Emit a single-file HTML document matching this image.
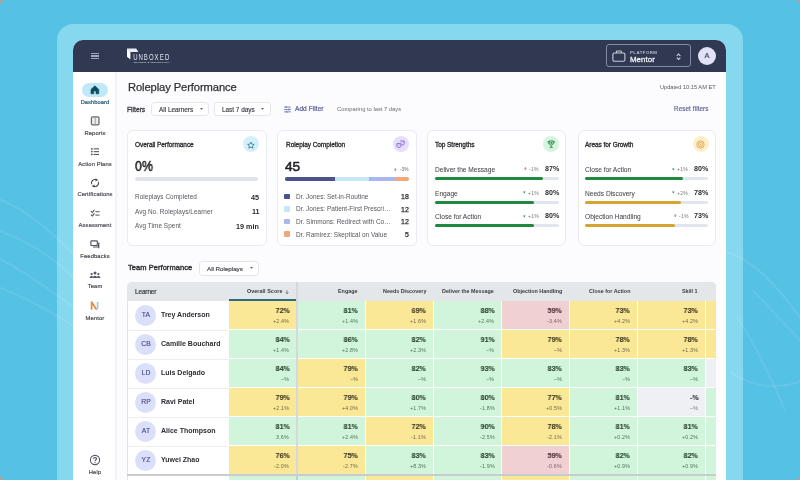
<!DOCTYPE html><html><head><meta charset="utf-8"><style>
html,body{margin:0;padding:0;width:800px;height:480px;overflow:hidden;background:#a4a4a4;font-family:"Liberation Sans", sans-serif;}
.t{position:absolute;line-height:1;white-space:nowrap;will-change:transform;}
svg{overflow:visible}
</style></head><body><div style="position:absolute;left:0.00px;top:0.00px;width:800.00px;height:480.00px;background:#55c1e5;border-radius:6px;"></div><div style="position:absolute;left:57.00px;top:24.00px;width:686.00px;height:516.00px;background:#85d8ee;border-radius:16px;"></div><svg style="position:absolute;left:0;top:0" width="800" height="480" viewBox="0 0 800 480">
<g fill="none" stroke="#ffffff" stroke-opacity="0.09" stroke-width="2.2">
<path d="M-10 196 C 20 205, 50 228, 80 262"/>
<path d="M-10 228 C 25 238, 55 258, 80 284"/>
<path d="M-10 254 C 20 268, 50 290, 80 312"/>
<path d="M-10 284 C 25 296, 55 314, 80 330"/>
<path d="M726 252 C 750 258, 778 285, 805 325"/>
<path d="M738 318 C 755 345, 770 375, 785 410"/>
<path d="M752 290 C 772 310, 790 330, 805 345"/>
<path d="M730 372 C 760 392, 790 388, 805 378"/>
</g></svg><div style="position:absolute;left:73.00px;top:40.00px;width:653.00px;height:480.00px;background:#fcfcfe;border-radius:10px;"></div><div style="position:absolute;left:73.00px;top:40.00px;width:653.00px;height:32.00px;background:#313851;border-radius:10px 10px 0 0;"></div><div style="position:absolute;left:90.60px;top:52.90px;width:8.80px;height:1.40px;background:#a3a7bc;"></div><div style="position:absolute;left:90.60px;top:55.30px;width:8.80px;height:1.40px;background:#a3a7bc;"></div><div style="position:absolute;left:90.60px;top:57.70px;width:8.80px;height:1.40px;background:#a3a7bc;"></div><svg style="position:absolute;left:126.00px;top:47.00px" width="14" height="14" viewBox="0 0 14 14"><polygon points="1,1.4 10.2,1.4 12.4,4.9 4.4,4.9" fill="#eceef6"/><polygon points="1,1.4 4.4,4.9 4.4,12.4 1,9.8" fill="#ffffff"/></svg><svg style="position:absolute;left:0;top:0;will-change:transform" width="800" height="80"><g font-family="Liberation Sans" font-size="9.4" fill="#dfe1ee"><text x="208.12" y="59.6" transform="scale(0.64,1)">U</text><text x="216.41" y="59.6" transform="scale(0.64,1)">N</text><text x="224.69" y="59.6" transform="scale(0.64,1)">B</text><text x="232.97" y="59.6" transform="scale(0.64,1)">O</text><text x="241.25" y="59.6" transform="scale(0.64,1)">X</text><text x="249.53" y="59.6" transform="scale(0.64,1)">E</text><text x="257.81" y="59.6" transform="scale(0.64,1)">D</text></g><text x="133.4" y="63.2" font-family="Liberation Sans" font-weight="700" font-size="2.2" fill="#c2c5d8" textLength="36.4" lengthAdjust="spacingAndGlyphs">TRAINING &amp; TECHNOLOGY</text></svg><div style="position:absolute;left:606.30px;top:44.40px;width:84.70px;height:22.50px;border:1px solid #858aa3;border-radius:3px;box-sizing:border-box;"></div><svg style="position:absolute;left:612.00px;top:50.00px" width="14" height="12" viewBox="0 0 14 12"><rect x="0.9" y="3" width="12" height="8.2" rx="1.5" fill="none" stroke="#c9ccd9" stroke-width="1.1"/><path d="M4.4 3 V1.8 Q4.4 0.9 5.3 0.9 H8.5 Q9.4 0.9 9.4 1.8 V3" fill="none" stroke="#c9ccd9" stroke-width="1.05"/></svg><div class="t" style="left:630.00px;top:50.63px;font-size:4.4px;font-weight:700;color:#b9bdcf;letter-spacing:0.42px;">PLATFORM</div><div class="t" style="left:630.00px;top:55.57px;font-size:7.9px;font-weight:400;color:#f3f4f8;-webkit-text-stroke:0.28px #f3f4f8;letter-spacing:0.05px;">Mentor</div><svg style="position:absolute;left:676.00px;top:52.50px" width="6" height="8" viewBox="0 0 6 8"><path d="M0.8 2.8 L2.6 1 L4.4 2.8 M0.8 4.7 L2.6 6.5 L4.4 4.7" fill="none" stroke="#c9ccd9" stroke-width="1.1"/></svg><div style="position:absolute;left:697.80px;top:46.80px;width:18.20px;height:18.20px;background:#e1e1f8;border-radius:50%;"></div><div class="t" style="left:606.90px;width:200px;text-align:center;top:51.93px;font-size:7.4px;font-weight:400;color:#3c3f5e;-webkit-text-stroke:0.2px #3c3f5e;">A</div><div style="position:absolute;left:73.00px;top:72.00px;width:41.60px;height:408.00px;background:#ffffff;"></div><div style="position:absolute;left:114.60px;top:72.00px;width:3.40px;height:408.00px;background:linear-gradient(to right,#eeeff3,#fcfcfe);"></div><div style="position:absolute;left:82.00px;top:83.10px;width:25.80px;height:13.70px;background:#bfe8f8;border-radius:7px;"></div><svg style="position:absolute;left:90.00px;top:85.00px" width="10" height="10" viewBox="0 0 10 10"><path d="M1 4.4 L4.9 0.8 L8.8 4.4 V8.8 H6 V6 H3.8 V8.8 H1 Z" fill="#0f4b5e" stroke="#0f4b5e" stroke-width="0.6" stroke-linejoin="round"/></svg><div class="t" style="left:-5.00px;width:200px;text-align:center;top:100.26px;font-size:5.7px;font-weight:400;color:#2a5f77;letter-spacing:0.1px;-webkit-text-stroke:0.22px #2a5f77;">Dashboard</div><div class="t" style="left:-5.00px;width:200px;text-align:center;top:130.54px;font-size:5.8px;font-weight:400;color:#4d4e55;-webkit-text-stroke:0.20px #4d4e55;letter-spacing:0.12px;">Reports</div><div class="t" style="left:-5.00px;width:200px;text-align:center;top:161.54px;font-size:5.8px;font-weight:400;color:#4d4e55;-webkit-text-stroke:0.20px #4d4e55;letter-spacing:0.12px;">Action Plans</div><div class="t" style="left:-5.00px;width:200px;text-align:center;top:192.24px;font-size:5.8px;font-weight:400;color:#4d4e55;-webkit-text-stroke:0.20px #4d4e55;letter-spacing:0.12px;">Certifications</div><div class="t" style="left:-5.00px;width:200px;text-align:center;top:223.24px;font-size:5.8px;font-weight:400;color:#4d4e55;-webkit-text-stroke:0.20px #4d4e55;letter-spacing:0.12px;">Assessment</div><div class="t" style="left:-5.00px;width:200px;text-align:center;top:254.24px;font-size:5.8px;font-weight:400;color:#4d4e55;-webkit-text-stroke:0.20px #4d4e55;letter-spacing:0.12px;">Feedbacks</div><div class="t" style="left:-5.00px;width:200px;text-align:center;top:284.44px;font-size:5.8px;font-weight:400;color:#4d4e55;-webkit-text-stroke:0.20px #4d4e55;letter-spacing:0.12px;">Team</div><div class="t" style="left:-5.00px;width:200px;text-align:center;top:315.74px;font-size:5.8px;font-weight:400;color:#4d4e55;-webkit-text-stroke:0.20px #4d4e55;letter-spacing:0.12px;">Mentor</div><div class="t" style="left:-5.00px;width:200px;text-align:center;top:470.04px;font-size:5.8px;font-weight:400;color:#4d4e55;-webkit-text-stroke:0.20px #4d4e55;letter-spacing:0.12px;">Help</div><svg style="position:absolute;left:90.00px;top:116.00px" width="10" height="10" viewBox="0 0 10 10"><rect x="1.4" y="0.9" width="7.6" height="7.9" rx="1.3" fill="#ececee" stroke="#66696f" stroke-width="1.25"/><path d="M5.2 1.2 V8.5" stroke="#8a8d93" stroke-width="0.8"/></svg><svg style="position:absolute;left:90.00px;top:147.00px" width="10" height="9" viewBox="0 0 10 9"><g fill="#555861"><circle cx="1.8" cy="1.9" r="0.9"/><circle cx="1.8" cy="4.6" r="0.9"/><circle cx="1.8" cy="7.4" r="0.9"/><rect x="3.6" y="1.3" width="5.4" height="1.1"/><rect x="3.6" y="4.1" width="5.4" height="1.1"/><rect x="3.6" y="6.9" width="5.4" height="1.1"/></g></svg><svg style="position:absolute;left:90.00px;top:177.80px" width="10" height="10" viewBox="0 0 10 10"><g fill="none" stroke="#505359" stroke-width="1.1"><path d="M1.7 6.2 A3.4 3.4 0 0 1 6.2 1.8"/><path d="M8.3 3.8 A3.4 3.4 0 0 1 3.8 8.2"/></g><g fill="#505359"><path d="M5.4 0.2 L8.4 2.0 L5.5 3.6 Z"/><path d="M4.6 9.8 L1.6 8.0 L4.5 6.4 Z"/></g></svg><svg style="position:absolute;left:90.00px;top:209.00px" width="11" height="9" viewBox="0 0 11 9"><g fill="none" stroke="#555861" stroke-width="1.1" stroke-linecap="round"><path d="M1.2 2.4 L2.4 3.5 L4.2 1.2"/><path d="M1.2 5.8 L2.4 6.9 L4.2 4.6"/></g><g fill="#555861"><rect x="5.4" y="2.2" width="4.2" height="1"/><rect x="5.4" y="5.6" width="4.2" height="1"/></g></svg><svg style="position:absolute;left:90.00px;top:239.50px" width="11" height="9" viewBox="0 0 11 9"><g fill="none" stroke="#555861" stroke-width="1.15"><rect x="0.9" y="0.9" width="6.4" height="4.6" rx="0.6"/><path d="M3 7 H8.6 V3 M8.8 2.4 V8.2"/></g></svg><svg style="position:absolute;left:89.00px;top:271.00px" width="12" height="8" viewBox="0 0 12 8"><g fill="#555861"><circle cx="6" cy="2" r="1.5"/><circle cx="2.6" cy="3.1" r="1.1"/><circle cx="9.4" cy="3.1" r="1.1"/><path d="M3.6 6.9 C3.8 4.4 8.2 4.4 8.4 6.9 Z"/><path d="M0.6 6.9 C0.7 5 3.2 4.6 3.8 5.4 L3.4 6.9 Z"/><path d="M11.4 6.9 C11.3 5 8.8 4.6 8.2 5.4 L8.6 6.9 Z"/></g></svg><svg style="position:absolute;left:90.00px;top:301.00px" width="10" height="10" viewBox="0 0 10 10"><path d="M1.6 8.8 V1 L6.6 8.8" fill="none" stroke="#e88a3c" stroke-width="1.7" stroke-linejoin="round"/><path d="M7.6 1 V8" fill="none" stroke="#8ccfe6" stroke-width="1.7"/></svg><svg style="position:absolute;left:89.00px;top:453.50px" width="12" height="12" viewBox="0 0 12 12"><circle cx="6" cy="6" r="4.6" fill="none" stroke="#555861" stroke-width="1.1"/><path d="M4.4 4.8 C4.4 3.2 7.6 3.2 7.6 4.8 C7.6 6 6 6 6 7.2" fill="none" stroke="#555861" stroke-width="1.05"/><circle cx="6" cy="8.6" r="0.6" fill="#555861"/></svg><div class="t" style="left:127.80px;top:82.44px;font-size:11.2px;font-weight:400;color:#2f3035;-webkit-text-stroke:0.25px #2f3035;letter-spacing:-0.1px;">Roleplay Performance</div><div class="t" style="right:84.90px;top:85.27px;font-size:5.6px;font-weight:400;color:#55565c;letter-spacing:0.03px;">Updated 10:15 AM ET</div><div class="t" style="left:127.30px;top:106.93px;font-size:6.7px;font-weight:400;color:#3f4046;-webkit-text-stroke:0.32px #3f4046;">Filters</div><div style="position:absolute;left:151.30px;top:102.40px;width:57.30px;height:13.70px;background:#fff;border:1px solid #e4e5eb;border-radius:3.5px;box-sizing:border-box;"></div><div class="t" style="left:158.70px;top:106.61px;font-size:6.4px;font-weight:400;color:#3a3b41;-webkit-text-stroke:0.15px #3a3b41;">All Learners</div><svg style="position:absolute;left:199.50px;top:108.35px" width="3" height="2" viewBox="0 0 3 2"><path d="M0 0 H3 L1.5 1.8 Z" fill="#55565c"/></svg><div style="position:absolute;left:214.40px;top:102.40px;width:56.20px;height:13.70px;background:#fff;border:1px solid #e4e5eb;border-radius:3.5px;box-sizing:border-box;"></div><div class="t" style="left:221.90px;top:106.61px;font-size:6.4px;font-weight:400;color:#3a3b41;-webkit-text-stroke:0.15px #3a3b41;">Last 7 days</div><svg style="position:absolute;left:261.00px;top:108.35px" width="3" height="2" viewBox="0 0 3 2"><path d="M0 0 H3 L1.5 1.8 Z" fill="#55565c"/></svg><svg style="position:absolute;left:283.50px;top:105.50px" width="8" height="7" viewBox="0 0 8 7"><g fill="#7b7fb0"><rect x="0" y="0.6" width="7" height="0.9"/><rect x="0" y="3" width="7" height="0.9"/><rect x="0" y="5.4" width="7" height="0.9"/><rect x="1.6" y="0" width="1.1" height="2.1"/><rect x="4.4" y="2.4" width="1.1" height="2.1"/><rect x="2.2" y="4.8" width="1.1" height="2.1"/></g></svg><div class="t" style="left:295.40px;top:106.25px;font-size:6.5px;font-weight:400;color:#5a5e9e;-webkit-text-stroke:0.23px #5a5e9e;letter-spacing:0.08px;">Add Filter</div><div class="t" style="left:336.90px;top:107.24px;font-size:5.8px;font-weight:400;color:#6a6b72;">Comparing to last 7 days</div><div class="t" style="right:91.80px;top:106.38px;font-size:6.3px;font-weight:400;color:#585c9c;letter-spacing:0.1px;-webkit-text-stroke:0.15px #585c9c;">Reset filters</div><div style="position:absolute;left:127.30px;top:129.90px;width:139.60px;height:116.50px;background:#fff;border:1px solid #eaebf0;border-radius:6px;box-sizing:border-box;"></div><div class="t" style="left:134.90px;top:142.15px;font-size:6.5px;font-weight:400;color:#2a2b30;letter-spacing:-0.05px;-webkit-text-stroke:0.3px #2a2b30;">Overall Performance</div><div style="position:absolute;left:243.00px;top:136.30px;width:16.00px;height:16.00px;background:#d4eff9;border-radius:50%;"></div><div style="position:absolute;left:277.10px;top:129.90px;width:139.80px;height:116.50px;background:#fff;border:1px solid #eaebf0;border-radius:6px;box-sizing:border-box;"></div><div class="t" style="left:285.60px;top:142.15px;font-size:6.5px;font-weight:400;color:#2a2b30;letter-spacing:-0.05px;-webkit-text-stroke:0.3px #2a2b30;">Roleplay Completion</div><div style="position:absolute;left:392.60px;top:136.30px;width:16.00px;height:16.00px;background:#e6dffb;border-radius:50%;"></div><div style="position:absolute;left:426.80px;top:129.90px;width:139.30px;height:116.50px;background:#fff;border:1px solid #eaebf0;border-radius:6px;box-sizing:border-box;"></div><div class="t" style="left:435.40px;top:142.15px;font-size:6.5px;font-weight:400;color:#2a2b30;letter-spacing:-0.05px;-webkit-text-stroke:0.3px #2a2b30;">Top Strengths</div><div style="position:absolute;left:542.70px;top:136.30px;width:16.00px;height:16.00px;background:#d6f5df;border-radius:50%;"></div><div style="position:absolute;left:577.50px;top:129.90px;width:138.40px;height:116.50px;background:#fff;border:1px solid #eaebf0;border-radius:6px;box-sizing:border-box;"></div><div class="t" style="left:584.80px;top:142.15px;font-size:6.5px;font-weight:400;color:#2a2b30;letter-spacing:-0.05px;-webkit-text-stroke:0.3px #2a2b30;">Areas for Growth</div><div style="position:absolute;left:692.50px;top:136.30px;width:16.00px;height:16.00px;background:#fdf0c9;border-radius:50%;"></div><svg style="position:absolute;left:247.00px;top:140.50px" width="8" height="8" viewBox="0 0 8 8"><path d="M3.9 1 L4.9 3.2 L7.2 3.4 L5.4 5 L6 7.2 L3.9 6.1 L1.8 7.2 L2.4 5 L0.6 3.4 L2.9 3.2 Z" fill="none" stroke="#3a7d8c" stroke-width="0.85" stroke-linejoin="round"/></svg><svg style="position:absolute;left:396.10px;top:139.80px" width="9" height="9" viewBox="0 0 9 9"><g fill="none" stroke="#7b5fd4" stroke-width="0.85"><path d="M0.9 3.6 H4.9 V6.4 C4.9 7.8 0.9 7.8 0.9 6.4 Z"/><path d="M4.2 1 H8.2 V3.6 C8.2 5 6.2 5.2 5.4 4.6"/></g><g fill="#7b5fd4"><circle cx="2.1" cy="5.1" r="0.35"/><circle cx="3.7" cy="5.1" r="0.35"/><circle cx="5.5" cy="2.4" r="0.35"/><circle cx="7" cy="2.4" r="0.35"/></g></svg><svg style="position:absolute;left:546.50px;top:140.00px" width="9" height="9" viewBox="0 0 9 9"><g fill="none" stroke="#2d8a4b" stroke-width="0.9"><path d="M2.3 0.9 H6.1 V3.3 A1.9 1.9 0 0 1 2.3 3.3 Z"/><path d="M2.3 1.5 H1 C0.8 3 1.6 3.6 2.5 3.7 M6.1 1.5 H7.4 C7.6 3 6.8 3.6 5.9 3.7 M4.2 5.3 V6.9"/></g><rect x="2.6" y="6.8" width="3.2" height="1" rx="0.4" fill="#2d8a4b"/><rect x="3.6" y="1.6" width="1.2" height="2.4" rx="0.6" fill="#2d8a4b"/></svg><svg style="position:absolute;left:696.00px;top:139.90px" width="9" height="9" viewBox="0 0 9 9"><g fill="none" stroke="#e3a055" stroke-width="0.9"><circle cx="4.5" cy="4.5" r="3.7"/><circle cx="4.5" cy="4.5" r="2.1"/></g><circle cx="4.5" cy="4.5" r="0.7" fill="#e3a055"/></svg><div class="t" style="left:135.10px;top:159.15px;font-size:14.2px;font-weight:400;color:#1f2024;-webkit-text-stroke:0.50px #1f2024;transform:scaleX(0.87);transform-origin:0 0;">0%</div><div style="position:absolute;left:134.50px;top:177.30px;width:123.80px;height:3.30px;background:#e1e3eb;border-radius:2px;"></div><div class="t" style="left:134.60px;top:194.36px;font-size:6.4px;font-weight:400;color:#55565c;letter-spacing:0.06px;">Roleplays Completed</div><div class="t" style="right:540.80px;top:193.86px;font-size:7.2px;font-weight:700;color:#2a2b30;">45</div><div class="t" style="left:134.60px;top:208.96px;font-size:6.4px;font-weight:400;color:#55565c;letter-spacing:0.06px;">Avg No. Roleplays/Learner</div><div class="t" style="right:540.80px;top:208.46px;font-size:7.2px;font-weight:700;color:#2a2b30;">11</div><div class="t" style="left:134.60px;top:223.16px;font-size:6.4px;font-weight:400;color:#55565c;letter-spacing:0.06px;">Avg Time Spent</div><div class="t" style="right:540.80px;top:222.66px;font-size:7.2px;font-weight:700;color:#2a2b30;">19 min</div><div class="t" style="left:285.00px;top:159.61px;font-size:13.7px;font-weight:400;color:#1f2024;-webkit-text-stroke:0.55px #1f2024;">45</div><svg style="position:absolute;left:394.40px;top:167.60px" width="3" height="3" viewBox="0 0 3 3"><path d="M1.3 0 V2.4 M0.3 1.5 L1.3 2.7 L2.3 1.5" fill="none" stroke="#d9534f" stroke-width="0.75"/></svg><div class="t" style="right:391.00px;top:167.67px;font-size:4.8px;font-weight:400;color:#6a6b72;">-3%</div><div style="position:absolute;left:285.00px;top:177px;width:124.2px;height:3.7px;border-radius:1.8px;overflow:hidden;display:flex"><div style="width:50.30px;background:#48548a"></div><div style="width:34.10px;background:#c6e8f6"></div><div style="width:25.40px;background:#a9b6ef"></div><div style="width:14.40px;background:#f1a97c"></div></div><div style="position:absolute;left:284.20px;top:193.50px;width:5.80px;height:5.60px;background:#48548a;border-radius:1px;"></div><div class="t" style="left:295.80px;top:193.56px;font-size:6.45px;font-weight:400;color:#55565c;letter-spacing:0.02px;">Dr. Jones: Set-in-Routine</div><div class="t" style="right:391.10px;top:193.09px;font-size:7.0px;font-weight:400;color:#2a2b30;-webkit-text-stroke:0.25px #2a2b30;letter-spacing:0.1px;">18</div><div style="position:absolute;left:284.20px;top:206.15px;width:5.80px;height:5.60px;background:#c6e8f6;border-radius:1px;"></div><div class="t" style="left:295.80px;top:206.21px;font-size:6.45px;font-weight:400;color:#55565c;letter-spacing:0.02px;">Dr. Jones: Patient-First Prescri…</div><div class="t" style="right:391.10px;top:205.74px;font-size:7.0px;font-weight:400;color:#2a2b30;-webkit-text-stroke:0.25px #2a2b30;letter-spacing:0.1px;">12</div><div style="position:absolute;left:284.20px;top:218.80px;width:5.80px;height:5.60px;background:#a9b6ef;border-radius:1px;"></div><div class="t" style="left:295.80px;top:218.86px;font-size:6.45px;font-weight:400;color:#55565c;letter-spacing:0.02px;">Dr. Simmons: Redirect with Co…</div><div class="t" style="right:391.10px;top:218.39px;font-size:7.0px;font-weight:400;color:#2a2b30;-webkit-text-stroke:0.25px #2a2b30;letter-spacing:0.1px;">12</div><div style="position:absolute;left:284.20px;top:231.45px;width:5.80px;height:5.60px;background:#f1a97c;border-radius:1px;"></div><div class="t" style="left:295.80px;top:231.51px;font-size:6.45px;font-weight:400;color:#55565c;letter-spacing:0.02px;">Dr. Ramirez: Skeptical on Value</div><div class="t" style="right:391.10px;top:231.04px;font-size:7.0px;font-weight:400;color:#2a2b30;-webkit-text-stroke:0.25px #2a2b30;letter-spacing:0.1px;">5</div><div class="t" style="left:435.20px;top:167.04px;font-size:6.6px;font-weight:400;color:#45464d;-webkit-text-stroke:0.05px #45464d;">Deliver the Message</div><div class="t" style="right:241.10px;top:166.17px;font-size:7.1px;font-weight:700;color:#2a2b30;">87%</div><div class="t" style="right:261.10px;top:167.33px;font-size:5.1px;font-weight:400;color:#7a7b82;letter-spacing:0.25px;">-1%</div><svg style="position:absolute;left:524.20px;top:167.10px" width="3" height="3" viewBox="0 0 3 3"><path d="M1.3 0 V2.4 M0.3 1.5 L1.3 2.7 L2.3 1.5" fill="none" stroke="#d9534f" stroke-width="0.75"/></svg><div style="position:absolute;left:435.20px;top:177.10px;width:123.50px;height:3.00px;background:#e3e5ee;border-radius:1.5px;"></div><div style="position:absolute;left:435.20px;top:177.10px;width:107.44px;height:3.00px;background:#1f8a3f;border-radius:1.5px;"></div><div class="t" style="left:435.20px;top:190.54px;font-size:6.6px;font-weight:400;color:#45464d;-webkit-text-stroke:0.05px #45464d;">Engage</div><div class="t" style="right:241.10px;top:189.67px;font-size:7.1px;font-weight:700;color:#2a2b30;">80%</div><div class="t" style="right:261.10px;top:190.83px;font-size:5.1px;font-weight:400;color:#7a7b82;letter-spacing:0.25px;">+1%</div><svg style="position:absolute;left:522.60px;top:191.40px" width="3" height="3" viewBox="0 0 3 3"><path d="M0 0.4 H2.6 L1.3 2.6 Z" fill="#2e8b57"/></svg><div style="position:absolute;left:435.20px;top:200.50px;width:123.50px;height:3.00px;background:#e3e5ee;border-radius:1.5px;"></div><div style="position:absolute;left:435.20px;top:200.50px;width:98.80px;height:3.00px;background:#1f8a3f;border-radius:1.5px;"></div><div class="t" style="left:435.20px;top:214.24px;font-size:6.6px;font-weight:400;color:#45464d;-webkit-text-stroke:0.05px #45464d;">Close for Action</div><div class="t" style="right:241.10px;top:213.17px;font-size:7.1px;font-weight:700;color:#2a2b30;">80%</div><div class="t" style="right:261.10px;top:214.33px;font-size:5.1px;font-weight:400;color:#7a7b82;letter-spacing:0.25px;">+1%</div><svg style="position:absolute;left:522.60px;top:214.90px" width="3" height="3" viewBox="0 0 3 3"><path d="M0 0.4 H2.6 L1.3 2.6 Z" fill="#2e8b57"/></svg><div style="position:absolute;left:435.20px;top:224.00px;width:123.50px;height:3.00px;background:#e3e5ee;border-radius:1.5px;"></div><div style="position:absolute;left:435.20px;top:224.00px;width:98.80px;height:3.00px;background:#1f8a3f;border-radius:1.5px;"></div><div class="t" style="left:584.60px;top:167.04px;font-size:6.6px;font-weight:400;color:#45464d;-webkit-text-stroke:0.05px #45464d;">Close for Action</div><div class="t" style="right:91.70px;top:166.17px;font-size:7.1px;font-weight:700;color:#2a2b30;">80%</div><div class="t" style="right:111.70px;top:167.33px;font-size:5.1px;font-weight:400;color:#7a7b82;letter-spacing:0.25px;">+1%</div><svg style="position:absolute;left:672.00px;top:167.90px" width="3" height="3" viewBox="0 0 3 3"><path d="M0 0.4 H2.6 L1.3 2.6 Z" fill="#2e8b57"/></svg><div style="position:absolute;left:584.60px;top:177.10px;width:123.50px;height:3.00px;background:#e3e5ee;border-radius:1.5px;"></div><div style="position:absolute;left:584.60px;top:177.10px;width:98.80px;height:3.00px;background:#1f8a3f;border-radius:1.5px;"></div><div class="t" style="left:584.60px;top:190.54px;font-size:6.6px;font-weight:400;color:#45464d;-webkit-text-stroke:0.05px #45464d;">Needs Discovery</div><div class="t" style="right:91.70px;top:189.67px;font-size:7.1px;font-weight:700;color:#2a2b30;">78%</div><div class="t" style="right:111.70px;top:190.83px;font-size:5.1px;font-weight:400;color:#7a7b82;letter-spacing:0.25px;">+2%</div><svg style="position:absolute;left:672.00px;top:191.40px" width="3" height="3" viewBox="0 0 3 3"><path d="M0 0.4 H2.6 L1.3 2.6 Z" fill="#2e8b57"/></svg><div style="position:absolute;left:584.60px;top:200.50px;width:123.50px;height:3.00px;background:#e3e5ee;border-radius:1.5px;"></div><div style="position:absolute;left:584.60px;top:200.50px;width:96.33px;height:3.00px;background:#d4a52f;border-radius:1.5px;"></div><div class="t" style="left:584.60px;top:214.24px;font-size:6.6px;font-weight:400;color:#45464d;-webkit-text-stroke:0.05px #45464d;">Objection Handling</div><div class="t" style="right:91.70px;top:213.17px;font-size:7.1px;font-weight:700;color:#2a2b30;">73%</div><div class="t" style="right:111.70px;top:214.33px;font-size:5.1px;font-weight:400;color:#7a7b82;letter-spacing:0.25px;">-1%</div><svg style="position:absolute;left:673.60px;top:214.10px" width="3" height="3" viewBox="0 0 3 3"><path d="M1.3 0 V2.4 M0.3 1.5 L1.3 2.7 L2.3 1.5" fill="none" stroke="#d9534f" stroke-width="0.75"/></svg><div style="position:absolute;left:584.60px;top:224.00px;width:123.50px;height:3.00px;background:#e3e5ee;border-radius:1.5px;"></div><div style="position:absolute;left:584.60px;top:224.00px;width:90.15px;height:3.00px;background:#d4a52f;border-radius:1.5px;"></div><div class="t" style="left:127.60px;top:264.02px;font-size:7.5px;font-weight:400;color:#2a2b30;letter-spacing:0.05px;-webkit-text-stroke:0.36px #2a2b30;">Team Performance</div><div style="position:absolute;left:199.30px;top:261.00px;width:59.40px;height:14.60px;background:#fff;border:1px solid #e4e5eb;border-radius:3.5px;box-sizing:border-box;"></div><div class="t" style="left:206.50px;top:265.69px;font-size:6.2px;font-weight:400;color:#3a3b41;-webkit-text-stroke:0.15px #3a3b41;">All Roleplays</div><svg style="position:absolute;left:249.70px;top:267.40px" width="3" height="2" viewBox="0 0 3 2"><path d="M0 0 H3 L1.5 1.8 Z" fill="#55565c"/></svg><div style="position:absolute;left:127.40px;top:282.20px;width:588.80px;height:197.80px;background:#ffffff;border:1px solid #e2e4e9;border-bottom:none;border-radius:5px 5px 0 0;box-sizing:border-box;"></div><div style="position:absolute;left:127.40px;top:282.20px;width:588.80px;height:18.60px;background:#e3e7ea;border-radius:5px 5px 0 0;"></div><div class="t" style="left:135.00px;top:288.66px;font-size:6.4px;font-weight:400;color:#3f4046;-webkit-text-stroke:0.22px #3f4046;letter-spacing:-0.1px;">Learner</div><div class="t" style="right:517.30px;top:289.09px;font-size:5.45px;font-weight:700;color:#3a3b42;letter-spacing:0.03px;">Overall Score</div><svg style="position:absolute;left:284.70px;top:290.00px" width="4" height="5" viewBox="0 0 4 5"><path d="M2 0.3 V3.6 M0.7 2.4 L2 3.8 L3.3 2.4" fill="none" stroke="#55565c" stroke-width="0.7"/></svg><div class="t" style="right:442.20px;top:289.10px;font-size:5.4px;font-weight:700;color:#3a3b42;">Engage</div><div class="t" style="right:374.00px;top:289.10px;font-size:5.4px;font-weight:700;color:#3a3b42;">Needs Discovery</div><div class="t" style="right:305.80px;top:289.10px;font-size:5.4px;font-weight:700;color:#3a3b42;">Deliver the Message</div><div class="t" style="right:238.00px;top:289.10px;font-size:5.4px;font-weight:700;color:#3a3b42;">Objection Handling</div><div class="t" style="right:170.00px;top:289.10px;font-size:5.4px;font-weight:700;color:#3a3b42;">Close for Action</div><div class="t" style="right:102.00px;top:289.10px;font-size:5.4px;font-weight:700;color:#3a3b42;">Skill 1</div><div style="position:absolute;left:228.50px;top:298.70px;width:67.80px;height:1.90px;background:#2b6c85;"></div><div style="position:absolute;left:296.30px;top:282.20px;width:2.10px;height:197.80px;background:#d6d8de;"></div><div style="position:absolute;left:128.40px;top:329.80px;width:100.10px;height:1.00px;background:#eceef1;"></div><div style="position:absolute;left:135.10px;top:305.30px;width:21.00px;height:21.00px;background:#dcdff9;border-radius:50%;"></div><div class="t" style="left:45.60px;width:200px;text-align:center;top:312.31px;font-size:6.8px;font-weight:400;color:#43488a;letter-spacing:0.15px;-webkit-text-stroke:0.12px #43488a;">TA</div><div class="t" style="left:160.70px;top:310.99px;font-size:7.0px;font-weight:700;color:#2c2d32;">Trey Anderson</div><div style="position:absolute;left:228.50px;top:301.30px;width:67.80px;height:28.00px;background:#fae897;"></div><div class="t" style="right:510.70px;top:306.87px;font-size:7.9px;font-weight:700;color:#3b3520;transform:scaleX(0.9);transform-origin:100% 0;-webkit-text-stroke:0.1px #3b3520;">72%</div><div class="t" style="right:510.70px;top:319.21px;font-size:5.3px;font-weight:400;color:#6d6748;letter-spacing:0.2px;">+2.4%</div><div style="position:absolute;left:298.40px;top:301.30px;width:66.60px;height:28.00px;background:#d0f5db;"></div><div class="t" style="right:442.00px;top:306.87px;font-size:7.9px;font-weight:700;color:#28402f;transform:scaleX(0.9);transform-origin:100% 0;-webkit-text-stroke:0.1px #28402f;">81%</div><div class="t" style="right:442.00px;top:319.21px;font-size:5.3px;font-weight:400;color:#55705d;letter-spacing:0.2px;">+1.4%</div><div style="position:absolute;left:365.90px;top:301.30px;width:67.30px;height:28.00px;background:#fae897;"></div><div class="t" style="right:373.80px;top:306.87px;font-size:7.9px;font-weight:700;color:#3b3520;transform:scaleX(0.9);transform-origin:100% 0;-webkit-text-stroke:0.1px #3b3520;">69%</div><div class="t" style="right:373.80px;top:319.21px;font-size:5.3px;font-weight:400;color:#6d6748;letter-spacing:0.2px;">+1.6%</div><div style="position:absolute;left:434.00px;top:301.30px;width:67.40px;height:28.00px;background:#d0f5db;"></div><div class="t" style="right:305.60px;top:306.87px;font-size:7.9px;font-weight:700;color:#28402f;transform:scaleX(0.9);transform-origin:100% 0;-webkit-text-stroke:0.1px #28402f;">88%</div><div class="t" style="right:305.60px;top:319.21px;font-size:5.3px;font-weight:400;color:#55705d;letter-spacing:0.2px;">+2.4%</div><div style="position:absolute;left:502.20px;top:301.30px;width:67.00px;height:28.00px;background:#f1d0d3;"></div><div class="t" style="right:237.80px;top:306.87px;font-size:7.9px;font-weight:700;color:#4a2f33;transform:scaleX(0.9);transform-origin:100% 0;-webkit-text-stroke:0.1px #4a2f33;">59%</div><div class="t" style="right:237.80px;top:319.21px;font-size:5.3px;font-weight:400;color:#7a5f63;letter-spacing:0.2px;">-3.4%</div><div style="position:absolute;left:570.00px;top:301.30px;width:67.20px;height:28.00px;background:#fae897;"></div><div class="t" style="right:169.80px;top:306.87px;font-size:7.9px;font-weight:700;color:#3b3520;transform:scaleX(0.9);transform-origin:100% 0;-webkit-text-stroke:0.1px #3b3520;">73%</div><div class="t" style="right:169.80px;top:319.21px;font-size:5.3px;font-weight:400;color:#6d6748;letter-spacing:0.2px;">+4.2%</div><div style="position:absolute;left:638.00px;top:301.30px;width:67.20px;height:28.00px;background:#fae897;"></div><div class="t" style="right:101.80px;top:306.87px;font-size:7.9px;font-weight:700;color:#3b3520;transform:scaleX(0.9);transform-origin:100% 0;-webkit-text-stroke:0.1px #3b3520;">73%</div><div class="t" style="right:101.80px;top:319.21px;font-size:5.3px;font-weight:400;color:#6d6748;letter-spacing:0.2px;">+4.2%</div><div style="position:absolute;left:706.00px;top:301.30px;width:10.20px;height:28.00px;background:#fae897;"></div><div style="position:absolute;left:128.40px;top:358.80px;width:100.10px;height:1.00px;background:#eceef1;"></div><div style="position:absolute;left:135.10px;top:334.30px;width:21.00px;height:21.00px;background:#dcdff9;border-radius:50%;"></div><div class="t" style="left:45.60px;width:200px;text-align:center;top:341.31px;font-size:6.8px;font-weight:400;color:#43488a;letter-spacing:0.15px;-webkit-text-stroke:0.12px #43488a;">CB</div><div class="t" style="left:160.70px;top:339.99px;font-size:7.0px;font-weight:700;color:#2c2d32;">Camille Bouchard</div><div style="position:absolute;left:228.50px;top:330.30px;width:67.80px;height:28.00px;background:#d0f5db;"></div><div class="t" style="right:510.70px;top:335.87px;font-size:7.9px;font-weight:700;color:#28402f;transform:scaleX(0.9);transform-origin:100% 0;-webkit-text-stroke:0.1px #28402f;">84%</div><div class="t" style="right:510.70px;top:348.21px;font-size:5.3px;font-weight:400;color:#55705d;letter-spacing:0.2px;">+1.4%</div><div style="position:absolute;left:298.40px;top:330.30px;width:66.60px;height:28.00px;background:#d0f5db;"></div><div class="t" style="right:442.00px;top:335.87px;font-size:7.9px;font-weight:700;color:#28402f;transform:scaleX(0.9);transform-origin:100% 0;-webkit-text-stroke:0.1px #28402f;">86%</div><div class="t" style="right:442.00px;top:348.21px;font-size:5.3px;font-weight:400;color:#55705d;letter-spacing:0.2px;">+2.8%</div><div style="position:absolute;left:365.90px;top:330.30px;width:67.30px;height:28.00px;background:#d0f5db;"></div><div class="t" style="right:373.80px;top:335.87px;font-size:7.9px;font-weight:700;color:#28402f;transform:scaleX(0.9);transform-origin:100% 0;-webkit-text-stroke:0.1px #28402f;">82%</div><div class="t" style="right:373.80px;top:348.21px;font-size:5.3px;font-weight:400;color:#55705d;letter-spacing:0.2px;">+2.3%</div><div style="position:absolute;left:434.00px;top:330.30px;width:67.40px;height:28.00px;background:#d0f5db;"></div><div class="t" style="right:305.60px;top:335.87px;font-size:7.9px;font-weight:700;color:#28402f;transform:scaleX(0.9);transform-origin:100% 0;-webkit-text-stroke:0.1px #28402f;">91%</div><div class="t" style="right:305.60px;top:348.21px;font-size:5.3px;font-weight:400;color:#55705d;letter-spacing:0.2px;">–%</div><div style="position:absolute;left:502.20px;top:330.30px;width:67.00px;height:28.00px;background:#fae897;"></div><div class="t" style="right:237.80px;top:335.87px;font-size:7.9px;font-weight:700;color:#3b3520;transform:scaleX(0.9);transform-origin:100% 0;-webkit-text-stroke:0.1px #3b3520;">79%</div><div class="t" style="right:237.80px;top:348.21px;font-size:5.3px;font-weight:400;color:#6d6748;letter-spacing:0.2px;">–%</div><div style="position:absolute;left:570.00px;top:330.30px;width:67.20px;height:28.00px;background:#fae897;"></div><div class="t" style="right:169.80px;top:335.87px;font-size:7.9px;font-weight:700;color:#3b3520;transform:scaleX(0.9);transform-origin:100% 0;-webkit-text-stroke:0.1px #3b3520;">78%</div><div class="t" style="right:169.80px;top:348.21px;font-size:5.3px;font-weight:400;color:#6d6748;letter-spacing:0.2px;">+1.3%</div><div style="position:absolute;left:638.00px;top:330.30px;width:67.20px;height:28.00px;background:#fae897;"></div><div class="t" style="right:101.80px;top:335.87px;font-size:7.9px;font-weight:700;color:#3b3520;transform:scaleX(0.9);transform-origin:100% 0;-webkit-text-stroke:0.1px #3b3520;">78%</div><div class="t" style="right:101.80px;top:348.21px;font-size:5.3px;font-weight:400;color:#6d6748;letter-spacing:0.2px;">+1.3%</div><div style="position:absolute;left:706.00px;top:330.30px;width:10.20px;height:28.00px;background:#fae897;"></div><div style="position:absolute;left:128.40px;top:387.80px;width:100.10px;height:1.00px;background:#eceef1;"></div><div style="position:absolute;left:135.10px;top:363.30px;width:21.00px;height:21.00px;background:#dcdff9;border-radius:50%;"></div><div class="t" style="left:45.60px;width:200px;text-align:center;top:370.31px;font-size:6.8px;font-weight:400;color:#43488a;letter-spacing:0.15px;-webkit-text-stroke:0.12px #43488a;">LD</div><div class="t" style="left:160.70px;top:368.99px;font-size:7.0px;font-weight:700;color:#2c2d32;">Luis Delgado</div><div style="position:absolute;left:228.50px;top:359.30px;width:67.80px;height:28.00px;background:#d0f5db;"></div><div class="t" style="right:510.70px;top:364.87px;font-size:7.9px;font-weight:700;color:#28402f;transform:scaleX(0.9);transform-origin:100% 0;-webkit-text-stroke:0.1px #28402f;">84%</div><div class="t" style="right:510.70px;top:377.21px;font-size:5.3px;font-weight:400;color:#55705d;letter-spacing:0.2px;">–%</div><div style="position:absolute;left:298.40px;top:359.30px;width:66.60px;height:28.00px;background:#fae897;"></div><div class="t" style="right:442.00px;top:364.87px;font-size:7.9px;font-weight:700;color:#3b3520;transform:scaleX(0.9);transform-origin:100% 0;-webkit-text-stroke:0.1px #3b3520;">79%</div><div class="t" style="right:442.00px;top:377.21px;font-size:5.3px;font-weight:400;color:#6d6748;letter-spacing:0.2px;">–%</div><div style="position:absolute;left:365.90px;top:359.30px;width:67.30px;height:28.00px;background:#d0f5db;"></div><div class="t" style="right:373.80px;top:364.87px;font-size:7.9px;font-weight:700;color:#28402f;transform:scaleX(0.9);transform-origin:100% 0;-webkit-text-stroke:0.1px #28402f;">82%</div><div class="t" style="right:373.80px;top:377.21px;font-size:5.3px;font-weight:400;color:#55705d;letter-spacing:0.2px;">–%</div><div style="position:absolute;left:434.00px;top:359.30px;width:67.40px;height:28.00px;background:#d0f5db;"></div><div class="t" style="right:305.60px;top:364.87px;font-size:7.9px;font-weight:700;color:#28402f;transform:scaleX(0.9);transform-origin:100% 0;-webkit-text-stroke:0.1px #28402f;">93%</div><div class="t" style="right:305.60px;top:377.21px;font-size:5.3px;font-weight:400;color:#55705d;letter-spacing:0.2px;">–%</div><div style="position:absolute;left:502.20px;top:359.30px;width:67.00px;height:28.00px;background:#d0f5db;"></div><div class="t" style="right:237.80px;top:364.87px;font-size:7.9px;font-weight:700;color:#28402f;transform:scaleX(0.9);transform-origin:100% 0;-webkit-text-stroke:0.1px #28402f;">83%</div><div class="t" style="right:237.80px;top:377.21px;font-size:5.3px;font-weight:400;color:#55705d;letter-spacing:0.2px;">–%</div><div style="position:absolute;left:570.00px;top:359.30px;width:67.20px;height:28.00px;background:#d0f5db;"></div><div class="t" style="right:169.80px;top:364.87px;font-size:7.9px;font-weight:700;color:#28402f;transform:scaleX(0.9);transform-origin:100% 0;-webkit-text-stroke:0.1px #28402f;">83%</div><div class="t" style="right:169.80px;top:377.21px;font-size:5.3px;font-weight:400;color:#55705d;letter-spacing:0.2px;">–%</div><div style="position:absolute;left:638.00px;top:359.30px;width:67.20px;height:28.00px;background:#d0f5db;"></div><div class="t" style="right:101.80px;top:364.87px;font-size:7.9px;font-weight:700;color:#28402f;transform:scaleX(0.9);transform-origin:100% 0;-webkit-text-stroke:0.1px #28402f;">83%</div><div class="t" style="right:101.80px;top:377.21px;font-size:5.3px;font-weight:400;color:#55705d;letter-spacing:0.2px;">–%</div><div style="position:absolute;left:706.00px;top:359.30px;width:10.20px;height:28.00px;background:#eff0f4;"></div><div style="position:absolute;left:128.40px;top:416.80px;width:100.10px;height:1.00px;background:#eceef1;"></div><div style="position:absolute;left:135.10px;top:392.30px;width:21.00px;height:21.00px;background:#dcdff9;border-radius:50%;"></div><div class="t" style="left:45.60px;width:200px;text-align:center;top:399.31px;font-size:6.8px;font-weight:400;color:#43488a;letter-spacing:0.15px;-webkit-text-stroke:0.12px #43488a;">RP</div><div class="t" style="left:160.70px;top:397.99px;font-size:7.0px;font-weight:700;color:#2c2d32;">Ravi Patel</div><div style="position:absolute;left:228.50px;top:388.30px;width:67.80px;height:28.00px;background:#fae897;"></div><div class="t" style="right:510.70px;top:393.87px;font-size:7.9px;font-weight:700;color:#3b3520;transform:scaleX(0.9);transform-origin:100% 0;-webkit-text-stroke:0.1px #3b3520;">79%</div><div class="t" style="right:510.70px;top:406.21px;font-size:5.3px;font-weight:400;color:#6d6748;letter-spacing:0.2px;">+2.1%</div><div style="position:absolute;left:298.40px;top:388.30px;width:66.60px;height:28.00px;background:#fae897;"></div><div class="t" style="right:442.00px;top:393.87px;font-size:7.9px;font-weight:700;color:#3b3520;transform:scaleX(0.9);transform-origin:100% 0;-webkit-text-stroke:0.1px #3b3520;">79%</div><div class="t" style="right:442.00px;top:406.21px;font-size:5.3px;font-weight:400;color:#6d6748;letter-spacing:0.2px;">+4.0%</div><div style="position:absolute;left:365.90px;top:388.30px;width:67.30px;height:28.00px;background:#d0f5db;"></div><div class="t" style="right:373.80px;top:393.87px;font-size:7.9px;font-weight:700;color:#28402f;transform:scaleX(0.9);transform-origin:100% 0;-webkit-text-stroke:0.1px #28402f;">80%</div><div class="t" style="right:373.80px;top:406.21px;font-size:5.3px;font-weight:400;color:#55705d;letter-spacing:0.2px;">+1.7%</div><div style="position:absolute;left:434.00px;top:388.30px;width:67.40px;height:28.00px;background:#d0f5db;"></div><div class="t" style="right:305.60px;top:393.87px;font-size:7.9px;font-weight:700;color:#28402f;transform:scaleX(0.9);transform-origin:100% 0;-webkit-text-stroke:0.1px #28402f;">80%</div><div class="t" style="right:305.60px;top:406.21px;font-size:5.3px;font-weight:400;color:#55705d;letter-spacing:0.2px;">-1.8%</div><div style="position:absolute;left:502.20px;top:388.30px;width:67.00px;height:28.00px;background:#fae897;"></div><div class="t" style="right:237.80px;top:393.87px;font-size:7.9px;font-weight:700;color:#3b3520;transform:scaleX(0.9);transform-origin:100% 0;-webkit-text-stroke:0.1px #3b3520;">77%</div><div class="t" style="right:237.80px;top:406.21px;font-size:5.3px;font-weight:400;color:#6d6748;letter-spacing:0.2px;">+0.5%</div><div style="position:absolute;left:570.00px;top:388.30px;width:67.20px;height:28.00px;background:#d0f5db;"></div><div class="t" style="right:169.80px;top:393.87px;font-size:7.9px;font-weight:700;color:#28402f;transform:scaleX(0.9);transform-origin:100% 0;-webkit-text-stroke:0.1px #28402f;">81%</div><div class="t" style="right:169.80px;top:406.21px;font-size:5.3px;font-weight:400;color:#55705d;letter-spacing:0.2px;">+1.1%</div><div style="position:absolute;left:638.00px;top:388.30px;width:67.20px;height:28.00px;background:#eff0f4;"></div><div class="t" style="right:101.80px;top:393.87px;font-size:7.9px;font-weight:700;color:#333;transform:scaleX(0.9);transform-origin:100% 0;-webkit-text-stroke:0.1px #333;">-%</div><div class="t" style="right:101.80px;top:406.21px;font-size:5.3px;font-weight:400;color:#777;letter-spacing:0.2px;">–%</div><div style="position:absolute;left:706.00px;top:388.30px;width:10.20px;height:28.00px;background:#d0f5db;"></div><div style="position:absolute;left:128.40px;top:445.80px;width:100.10px;height:1.00px;background:#eceef1;"></div><div style="position:absolute;left:135.10px;top:421.30px;width:21.00px;height:21.00px;background:#dcdff9;border-radius:50%;"></div><div class="t" style="left:45.60px;width:200px;text-align:center;top:428.31px;font-size:6.8px;font-weight:400;color:#43488a;letter-spacing:0.15px;-webkit-text-stroke:0.12px #43488a;">AT</div><div class="t" style="left:160.70px;top:426.99px;font-size:7.0px;font-weight:700;color:#2c2d32;">Alice Thompson</div><div style="position:absolute;left:228.50px;top:417.30px;width:67.80px;height:28.00px;background:#d0f5db;"></div><div class="t" style="right:510.70px;top:422.87px;font-size:7.9px;font-weight:700;color:#28402f;transform:scaleX(0.9);transform-origin:100% 0;-webkit-text-stroke:0.1px #28402f;">81%</div><div class="t" style="right:510.70px;top:435.21px;font-size:5.3px;font-weight:400;color:#55705d;letter-spacing:0.2px;">3.6%</div><div style="position:absolute;left:298.40px;top:417.30px;width:66.60px;height:28.00px;background:#d0f5db;"></div><div class="t" style="right:442.00px;top:422.87px;font-size:7.9px;font-weight:700;color:#28402f;transform:scaleX(0.9);transform-origin:100% 0;-webkit-text-stroke:0.1px #28402f;">81%</div><div class="t" style="right:442.00px;top:435.21px;font-size:5.3px;font-weight:400;color:#55705d;letter-spacing:0.2px;">+2.4%</div><div style="position:absolute;left:365.90px;top:417.30px;width:67.30px;height:28.00px;background:#fae897;"></div><div class="t" style="right:373.80px;top:422.87px;font-size:7.9px;font-weight:700;color:#3b3520;transform:scaleX(0.9);transform-origin:100% 0;-webkit-text-stroke:0.1px #3b3520;">72%</div><div class="t" style="right:373.80px;top:435.21px;font-size:5.3px;font-weight:400;color:#6d6748;letter-spacing:0.2px;">-1.1%</div><div style="position:absolute;left:434.00px;top:417.30px;width:67.40px;height:28.00px;background:#d0f5db;"></div><div class="t" style="right:305.60px;top:422.87px;font-size:7.9px;font-weight:700;color:#28402f;transform:scaleX(0.9);transform-origin:100% 0;-webkit-text-stroke:0.1px #28402f;">90%</div><div class="t" style="right:305.60px;top:435.21px;font-size:5.3px;font-weight:400;color:#55705d;letter-spacing:0.2px;">-2.5%</div><div style="position:absolute;left:502.20px;top:417.30px;width:67.00px;height:28.00px;background:#fae897;"></div><div class="t" style="right:237.80px;top:422.87px;font-size:7.9px;font-weight:700;color:#3b3520;transform:scaleX(0.9);transform-origin:100% 0;-webkit-text-stroke:0.1px #3b3520;">78%</div><div class="t" style="right:237.80px;top:435.21px;font-size:5.3px;font-weight:400;color:#6d6748;letter-spacing:0.2px;">-2.1%</div><div style="position:absolute;left:570.00px;top:417.30px;width:67.20px;height:28.00px;background:#d0f5db;"></div><div class="t" style="right:169.80px;top:422.87px;font-size:7.9px;font-weight:700;color:#28402f;transform:scaleX(0.9);transform-origin:100% 0;-webkit-text-stroke:0.1px #28402f;">81%</div><div class="t" style="right:169.80px;top:435.21px;font-size:5.3px;font-weight:400;color:#55705d;letter-spacing:0.2px;">+0.2%</div><div style="position:absolute;left:638.00px;top:417.30px;width:67.20px;height:28.00px;background:#d0f5db;"></div><div class="t" style="right:101.80px;top:422.87px;font-size:7.9px;font-weight:700;color:#28402f;transform:scaleX(0.9);transform-origin:100% 0;-webkit-text-stroke:0.1px #28402f;">81%</div><div class="t" style="right:101.80px;top:435.21px;font-size:5.3px;font-weight:400;color:#55705d;letter-spacing:0.2px;">+0.2%</div><div style="position:absolute;left:706.00px;top:417.30px;width:10.20px;height:28.00px;background:#d0f5db;"></div><div style="position:absolute;left:128.40px;top:474.80px;width:100.10px;height:1.00px;background:#eceef1;"></div><div style="position:absolute;left:135.10px;top:450.30px;width:21.00px;height:21.00px;background:#dcdff9;border-radius:50%;"></div><div class="t" style="left:45.60px;width:200px;text-align:center;top:457.31px;font-size:6.8px;font-weight:400;color:#43488a;letter-spacing:0.15px;-webkit-text-stroke:0.12px #43488a;">YZ</div><div class="t" style="left:160.70px;top:455.99px;font-size:7.0px;font-weight:700;color:#2c2d32;">Yuwei Zhao</div><div style="position:absolute;left:228.50px;top:446.30px;width:67.80px;height:28.00px;background:#fae897;"></div><div class="t" style="right:510.70px;top:451.87px;font-size:7.9px;font-weight:700;color:#3b3520;transform:scaleX(0.9);transform-origin:100% 0;-webkit-text-stroke:0.1px #3b3520;">76%</div><div class="t" style="right:510.70px;top:464.21px;font-size:5.3px;font-weight:400;color:#6d6748;letter-spacing:0.2px;">-2.0%</div><div style="position:absolute;left:298.40px;top:446.30px;width:66.60px;height:28.00px;background:#fae897;"></div><div class="t" style="right:442.00px;top:451.87px;font-size:7.9px;font-weight:700;color:#3b3520;transform:scaleX(0.9);transform-origin:100% 0;-webkit-text-stroke:0.1px #3b3520;">75%</div><div class="t" style="right:442.00px;top:464.21px;font-size:5.3px;font-weight:400;color:#6d6748;letter-spacing:0.2px;">-2.7%</div><div style="position:absolute;left:365.90px;top:446.30px;width:67.30px;height:28.00px;background:#d0f5db;"></div><div class="t" style="right:373.80px;top:451.87px;font-size:7.9px;font-weight:700;color:#28402f;transform:scaleX(0.9);transform-origin:100% 0;-webkit-text-stroke:0.1px #28402f;">83%</div><div class="t" style="right:373.80px;top:464.21px;font-size:5.3px;font-weight:400;color:#55705d;letter-spacing:0.2px;">+8.3%</div><div style="position:absolute;left:434.00px;top:446.30px;width:67.40px;height:28.00px;background:#d0f5db;"></div><div class="t" style="right:305.60px;top:451.87px;font-size:7.9px;font-weight:700;color:#28402f;transform:scaleX(0.9);transform-origin:100% 0;-webkit-text-stroke:0.1px #28402f;">83%</div><div class="t" style="right:305.60px;top:464.21px;font-size:5.3px;font-weight:400;color:#55705d;letter-spacing:0.2px;">-1.9%</div><div style="position:absolute;left:502.20px;top:446.30px;width:67.00px;height:28.00px;background:#f1d0d3;"></div><div class="t" style="right:237.80px;top:451.87px;font-size:7.9px;font-weight:700;color:#4a2f33;transform:scaleX(0.9);transform-origin:100% 0;-webkit-text-stroke:0.1px #4a2f33;">59%</div><div class="t" style="right:237.80px;top:464.21px;font-size:5.3px;font-weight:400;color:#7a5f63;letter-spacing:0.2px;">-0.6%</div><div style="position:absolute;left:570.00px;top:446.30px;width:67.20px;height:28.00px;background:#d0f5db;"></div><div class="t" style="right:169.80px;top:451.87px;font-size:7.9px;font-weight:700;color:#28402f;transform:scaleX(0.9);transform-origin:100% 0;-webkit-text-stroke:0.1px #28402f;">82%</div><div class="t" style="right:169.80px;top:464.21px;font-size:5.3px;font-weight:400;color:#55705d;letter-spacing:0.2px;">+0.9%</div><div style="position:absolute;left:638.00px;top:446.30px;width:67.20px;height:28.00px;background:#d0f5db;"></div><div class="t" style="right:101.80px;top:451.87px;font-size:7.9px;font-weight:700;color:#28402f;transform:scaleX(0.9);transform-origin:100% 0;-webkit-text-stroke:0.1px #28402f;">82%</div><div class="t" style="right:101.80px;top:464.21px;font-size:5.3px;font-weight:400;color:#55705d;letter-spacing:0.2px;">+0.9%</div><div style="position:absolute;left:706.00px;top:446.30px;width:10.20px;height:28.00px;background:#d0f5db;"></div><div style="position:absolute;left:127.40px;top:474.30px;width:588.80px;height:2.00px;background:#c9cbd2;"></div><div style="position:absolute;left:228.50px;top:476.30px;width:67.80px;height:4.70px;background:#d0f5db;"></div><div style="position:absolute;left:298.40px;top:476.30px;width:66.60px;height:4.70px;background:#d0f5db;"></div><div style="position:absolute;left:365.90px;top:476.30px;width:67.30px;height:4.70px;background:#fae897;"></div><div style="position:absolute;left:434.00px;top:476.30px;width:67.40px;height:4.70px;background:#d0f5db;"></div><div style="position:absolute;left:502.20px;top:476.30px;width:67.00px;height:4.70px;background:#fae897;"></div><div style="position:absolute;left:570.00px;top:476.30px;width:67.20px;height:4.70px;background:#d0f5db;"></div><div style="position:absolute;left:638.00px;top:476.30px;width:67.20px;height:4.70px;background:#d0f5db;"></div><div style="position:absolute;left:706.00px;top:476.30px;width:10.20px;height:4.70px;background:#d0f5db;"></div><div style="position:absolute;left:296.30px;top:474.30px;width:2.10px;height:5.70px;background:#c9cbd2;"></div></body></html>
